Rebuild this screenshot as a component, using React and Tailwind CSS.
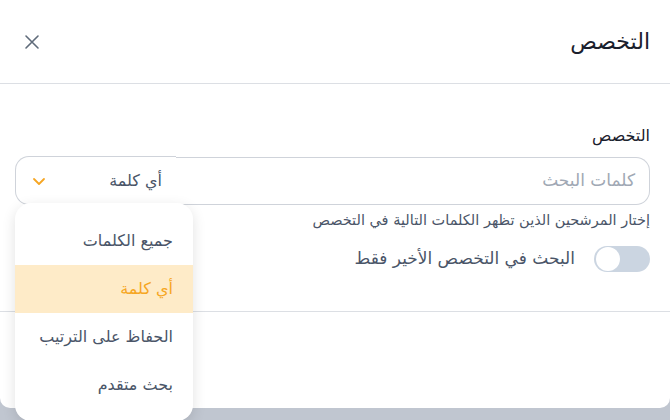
import { useState } from "react";

export default function App() {
  const [selected] = useState("أي كلمة");
  const options = ["جميع الكلمات", "أي كلمة", "الحفاظ على الترتيب", "بحث متقدم"];

  return (
    <div
      dir="rtl"
      className="relative w-[670px] h-[420px] overflow-hidden bg-[#c0c6d0] text-[#2d3748]"
      style={{ fontFamily: "'DejaVu Sans', 'Noto Sans', sans-serif" }}
    >
      {/* Modal */}
      <div className="h-[408px] bg-white rounded-b-[10px] flex flex-col">
        {/* Header */}
        <div className="h-[84px] shrink-0 flex items-center justify-between pr-5 pl-[24px] border-b border-[#dcdfe4]">
          <h2 className="text-[22px] text-[#1a202c]">التخصص</h2>
          <button className="text-[#5f6b7a]">
            <svg width="16" height="16" viewBox="0 0 16 16" fill="none" stroke="currentColor" strokeWidth="1.6" strokeLinecap="round">
              <path d="M2 2l12 12M14 2L2 14" />
            </svg>
          </button>
        </div>

        {/* Body */}
        <div className="h-[228px] shrink-0 border-b border-[#dcdfe4] px-5 pt-[40px]">
          <label className="block text-[16px] text-[#1a202c] font-medium mb-[9px] leading-[24px]">التخصص</label>
          <div className="flex h-[48px] -ml-[5px]">
            <div className="flex-1 border border-[#cfd3da] rounded-r-[14px] border-l-0 flex items-center pr-[14px] text-[17px] text-[#a0a8b4]">
              كلمات البحث
            </div>
            <div className="w-[161px] border border-r-0 border-[#cfd3da] rounded-l-[14px] flex items-center justify-between pr-[14px] pl-[16px] text-[16px] text-[#4a5568] -mt-px">
              <span>{selected}</span>
              <svg width="14" height="14" viewBox="0 0 14 14" fill="none" stroke="#f6a623" strokeWidth="1.8" strokeLinecap="round" strokeLinejoin="round">
                <path d="M2 5l5 5 5-5" />
              </svg>
            </div>
          </div>
          <p className="mt-[5px] text-[14.5px] text-[#4a5568] leading-[20px]">
            إختار المرشحين الذين تظهر الكلمات التالية في التخصص
          </p>
          <div className="mt-[16px] flex items-center gap-[19px]">
            <div className="w-[56px] h-[26px] rounded-full bg-[#cbd5e1] flex items-center justify-end pl-[2px]">
              <div className="w-[24px] h-[24px] rounded-full bg-white" />
            </div>
            <span className="text-[17px] text-[#4a5568]">البحث في التخصص الأخير فقط</span>
          </div>
        </div>
      </div>

      {/* Dropdown menu */}
      <div className="absolute left-[15px] top-[203px] w-[178px] bg-white rounded-[16px] shadow-[0_4px_14px_rgba(0,0,0,0.12)] pt-[14px] pb-[12px]">
        {options.map((opt) => (
          <div
            key={opt}
            className={`h-[48px] flex items-center pr-[20px] text-[16px] ${
              opt === selected ? "bg-[#feebc8] text-[#f6a623]" : "text-[#4a5568]"
            }`}
          >
            {opt}
          </div>
        ))}
      </div>
    </div>
  );
}
